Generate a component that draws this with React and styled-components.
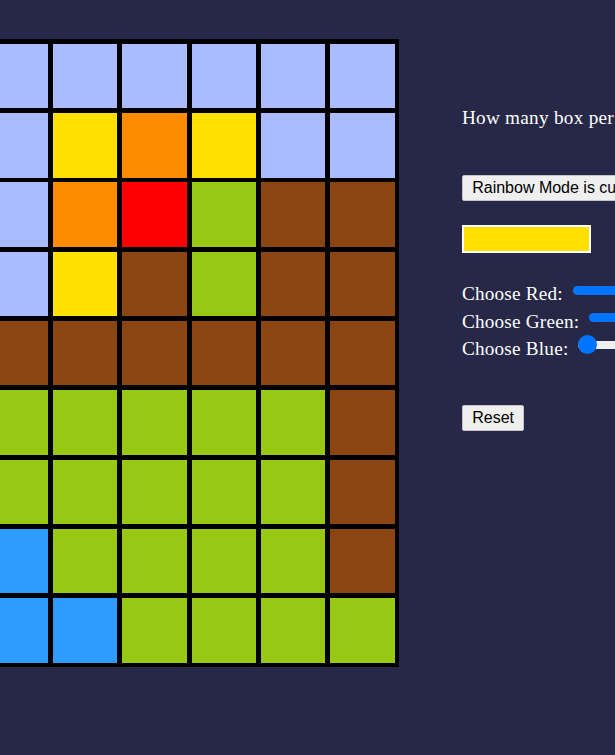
import React, { useState } from "react";
import styled, { createGlobalStyle } from "styled-components";

const GlobalStyle = createGlobalStyle`
  html, body {
    margin: 0;
    padding: 0;
    background: #272848;
    overflow: hidden;
  }
  body {
    font-family: "Liberation Serif", "Times New Roman", serif;
  }
`;

const Page = styled.div`
  display: flex;
  align-items: flex-start;
  width: 100vw;
  min-height: 100vh;
  padding-top: 39px;
  box-sizing: border-box;
  overflow: hidden;
`;

const Board = styled.div`
  flex: none;
  display: grid;
  grid-template-columns: repeat(6, 64.4px);
  grid-auto-rows: 64.4px;
  gap: 4.9px;
  padding: 4.9px;
  margin-left: -21.2px;
  background: #000;
`;

const Cell = styled.div`
  background: ${(p) => p.$color};
`;

const Panel = styled.div`
  flex: none;
  display: flex;
  flex-direction: column;
  align-items: flex-start;
  margin-left: 62.5px;
  padding-top: 68px;
  white-space: nowrap;
`;

const Prompt = styled.p`
  margin: 0;
  font-family: "Liberation Serif", "Times New Roman", serif;
  font-size: 19.2px;
  letter-spacing: 0.28px;
  line-height: normal;
  color: #fff;
`;

const Button = styled.button`
  margin-top: ${(p) => p.$mt}px;
  font-family: "Liberation Sans", Arial, sans-serif;
  font-size: 16px;
  line-height: normal;
  color: #000;
  background: #efefef;
  border: 1px solid #c4c4c4;
  border-radius: 2px;
  padding: 3px 9.3px;
  white-space: nowrap;
  cursor: pointer;
`;

const Swatch = styled.div`
  margin-top: 24px;
  width: 125px;
  height: 24.3px;
  border: 2px solid #fff;
  background: ${(p) => p.$color};
`;

const Sliders = styled.div`
  margin-top: 27px;
  display: flex;
  flex-direction: column;
`;

const SliderRow = styled.label`
  display: flex;
  align-items: flex-start;
  gap: 10px;
  height: 27.3px;
`;

const SliderLabel = styled.span`
  font-family: "Liberation Serif", "Times New Roman", serif;
  font-size: 19.2px;
  letter-spacing: 0.22px;
  line-height: 27.3px;
  color: #fff;
`;

const Range = styled.input`
  -webkit-appearance: none;
  appearance: none;
  flex: none;
  width: 155px;
  height: 19.2px;
  margin: 0.4px 0 0 0;
  background: transparent;

  &::-webkit-slider-runnable-track {
    height: 8.5px;
    border-radius: 4.25px;
    background: linear-gradient(
      to right,
      #0075ff ${(p) => p.$fill}%,
      #efefef ${(p) => p.$fill}%
    );
  }

  &::-webkit-slider-thumb {
    -webkit-appearance: none;
    appearance: none;
    width: 19px;
    height: 19px;
    margin-top: -5.25px;
    border-radius: 50%;
    background: #0075ff;
    border: none;
  }
`;

const P = "#aabbff";
const Y = "#ffe000";
const O = "#ff8c00";
const R = "#ff0000";
const G = "#97c914";
const B = "#8b4513";
const L = "#2d9bff";

const grid = [
  [P, P, P, P, P, P],
  [P, Y, O, Y, P, P],
  [P, O, R, G, B, B],
  [P, Y, B, G, B, B],
  [B, B, B, B, B, B],
  [G, G, G, G, G, B],
  [G, G, G, G, G, B],
  [L, G, G, G, G, B],
  [L, L, G, G, G, G],
];

export default function App() {
  const [rgb, setRgb] = useState({ r: 255, g: 224, b: 0 });
  const color = `rgb(${rgb.r}, ${rgb.g}, ${rgb.b})`;
  const sliders = [
    { key: "r", label: "Choose Red:" },
    { key: "g", label: "Choose Green:" },
    { key: "b", label: "Choose Blue:" },
  ];

  return (
    <>
      <GlobalStyle />
      <Page>
        <Board>
          {grid.flatMap((row, i) =>
            row.map((c, j) => <Cell key={`${i}-${j}`} $color={c} />)
          )}
        </Board>
        <Panel>
          <Prompt>How many box per side? (max 100)</Prompt>
          <Button $mt={46}>Rainbow Mode is currently OFF</Button>
          <Swatch $color={color} />
          <Sliders>
            {sliders.map((s) => (
              <SliderRow key={s.key}>
                <SliderLabel>{s.label}</SliderLabel>
                <Range
                  type="range"
                  min="0"
                  max="255"
                  value={rgb[s.key]}
                  $fill={(rgb[s.key] / 255) * 100}
                  onChange={(e) =>
                    setRgb({ ...rgb, [s.key]: Number(e.target.value) })
                  }
                />
              </SliderRow>
            ))}
          </Sliders>
          <Button $mt={42.8}>Reset</Button>
        </Panel>
      </Page>
    </>
  );
}
